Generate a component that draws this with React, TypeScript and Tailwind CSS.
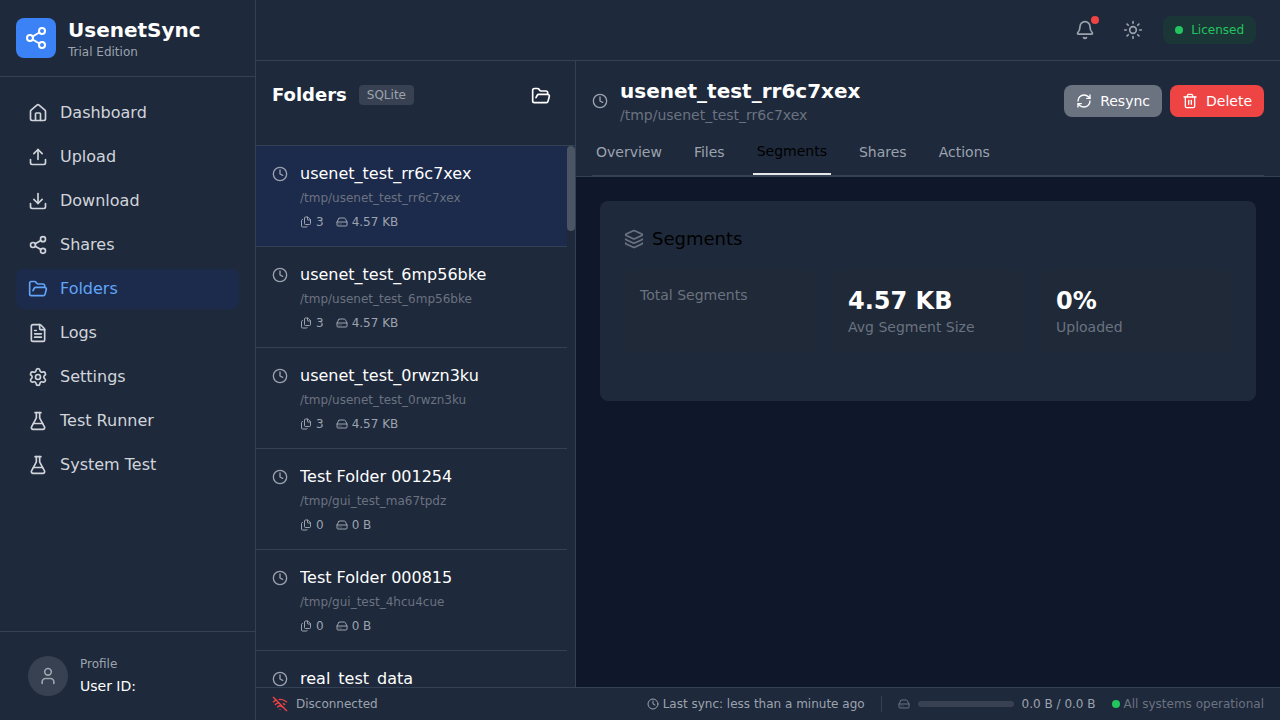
import { Share2, House, Upload, Download, FolderOpen, FileText, Settings, FlaskConical, Clock, Files, HardDrive, Bell, Sun, RefreshCw, Trash2, Layers, User, WifiOff } from "lucide-react";

const nav = [
  { label: "Dashboard", Icon: House },
  { label: "Upload", Icon: Upload },
  { label: "Download", Icon: Download },
  { label: "Shares", Icon: Share2 },
  { label: "Folders", Icon: FolderOpen, active: true },
  { label: "Logs", Icon: FileText },
  { label: "Settings", Icon: Settings },
  { label: "Test Runner", Icon: FlaskConical },
  { label: "System Test", Icon: FlaskConical },
];

const folders = [
  { name: "usenet_test_rr6c7xex", path: "/tmp/usenet_test_rr6c7xex", count: "3", size: "4.57 KB", active: true },
  { name: "usenet_test_6mp56bke", path: "/tmp/usenet_test_6mp56bke", count: "3", size: "4.57 KB" },
  { name: "usenet_test_0rwzn3ku", path: "/tmp/usenet_test_0rwzn3ku", count: "3", size: "4.57 KB" },
  { name: "Test Folder 001254", path: "/tmp/gui_test_ma67tpdz", count: "0", size: "0 B" },
  { name: "Test Folder 000815", path: "/tmp/gui_test_4hcu4cue", count: "0", size: "0 B" },
  { name: "real_test_data" },
];

const tabs = ["Overview", "Files", "Segments", "Shares", "Actions"];

export default function App() {
  return (
    <div className="flex h-[720px] w-[1280px] overflow-hidden bg-[#0f172a] font-['DejaVu_Sans',sans-serif] text-white">
      <aside className="flex w-64 shrink-0 flex-col border-r border-[#334155] bg-[#1e293b]">
        <div className="flex h-[77px] shrink-0 items-center gap-3 border-b border-[#334155] px-4">
          <div className="flex h-10 w-10 items-center justify-center rounded-lg bg-[#3b82f6]">
            <Share2 size={24} strokeWidth={2} className="text-white" />
          </div>
          <div>
            <div className="text-[20px] leading-7 font-bold text-white">UsenetSync</div>
            <div className="text-xs leading-4 text-[#9ca3af]">Trial Edition</div>
          </div>
        </div>
        <nav className="flex flex-1 flex-col gap-1 p-4">
          {nav.map(({ label, Icon, active }) => (
            <div
              key={label}
              className={`flex h-10 items-center gap-3 rounded-lg px-3 text-base ${active ? "bg-[#1c2a4b] text-[#60a5fa]" : "text-[#d1d5db]"}`}
            >
              <Icon size={20} strokeWidth={2} />
              <span>{label}</span>
            </div>
          ))}
        </nav>
        <div className="flex h-[89px] shrink-0 items-center gap-3 border-t border-[#334155] px-7 pb-[1px]">
          <div className="flex h-10 w-10 items-center justify-center rounded-full bg-[#374151]">
            <User size={20} strokeWidth={2} className="text-[#9ca3af]" />
          </div>
          <div>
            <div className="text-xs leading-4 text-[#9ca3af]">Profile</div>
            <div className="mt-1 text-sm leading-5 font-medium text-white">User ID:</div>
          </div>
        </div>
      </aside>

      <div className="flex min-w-0 flex-1 flex-col">
        <header className="flex h-[61px] shrink-0 items-center justify-end gap-3 border-b border-[#334155] bg-[#1e293b] px-6">
          <div className="relative flex h-9 w-9 items-center justify-center text-[#9ca3af]">
            <Bell size={20} strokeWidth={2} />
            <span className="absolute top-1 right-1 h-2 w-2 rounded-full bg-[#ef4444]" />
          </div>
          <div className="flex h-9 w-9 items-center justify-center text-[#9ca3af]">
            <Sun size={20} strokeWidth={2} />
          </div>
          <div className="flex h-7 items-center gap-2 rounded-lg bg-[#1b3637] px-3 text-xs text-[#22c55e]">
            <span className="h-2 w-2 rounded-full bg-[#22c55e]" />
            Licensed
          </div>
        </header>

        <div className="flex min-h-0 flex-1">
          <section className="flex w-80 shrink-0 flex-col border-r border-[#334155] bg-[#1e293b]">
            <div className="flex h-[85px] shrink-0 items-start justify-between border-b border-[#334155] px-4 pt-5">
              <div className="flex items-center gap-3">
                <h2 className="text-lg leading-7 font-bold text-white">Folders</h2>
                <span className="rounded bg-[#374151] px-2 py-0.5 text-xs leading-4 text-[#9ca3af]">SQLite</span>
              </div>
              <FolderOpen size={20} strokeWidth={2} className="mt-[5px] mr-[8px] text-white" />
            </div>
            <div className="flex min-h-0 flex-1">
              <div className="min-w-0 flex-1 overflow-hidden">
                {folders.map((f) => (
                  <div
                    key={f.name}
                    className={`flex h-[101px] gap-3 border-b border-[#334155] px-4 pt-4 ${f.active ? "bg-[#1c2a4b]" : ""}`}
                  >
                    <Clock size={16} strokeWidth={2} className="mt-[4px] shrink-0 text-[#9ca3af]" />
                    <div className="min-w-0">
                      <div className="truncate text-base leading-6 text-white">{f.name}</div>
                      {f.path && (
                        <>
                          <div className="mt-1 truncate text-xs leading-4 text-[#6b7280]">{f.path}</div>
                          <div className="mt-2 flex items-center gap-3 text-xs leading-4 text-[#9ca3af]">
                            <span className="flex items-center gap-1">
                              <Files size={12} strokeWidth={2} />
                              {f.count}
                            </span>
                            <span className="flex items-center gap-1">
                              <HardDrive size={12} strokeWidth={2} />
                              {f.size}
                            </span>
                          </div>
                        </>
                      )}
                    </div>
                  </div>
                ))}
              </div>
              <div className="w-2 shrink-0 bg-[#1e293b]">
                <div className="h-[85px] rounded bg-[#4b5563]" />
              </div>
            </div>
          </section>

          <main className="flex min-w-0 flex-1 flex-col">
            <div className="shrink-0 border-b border-[#334155] bg-[#1e293b]">
              <div className="flex h-[71px] items-start justify-between px-4 pt-4">
                <div className="flex items-center gap-3">
                  <Clock size={16} strokeWidth={2} className="text-[#9ca3af]" />
                  <div>
                    <div className="text-[20px] leading-7 font-bold text-white">usenet_test_rr6c7xex</div>
                    <div className="text-sm leading-5 text-[#6b7280]">/tmp/usenet_test_rr6c7xex</div>
                  </div>
                </div>
                <div className="flex gap-2 pt-2">
                  <div className="flex h-8 items-center gap-2 rounded-lg bg-[#6b7280] px-3 text-sm text-white">
                    <RefreshCw size={16} strokeWidth={2} />
                    Resync
                  </div>
                  <div className="flex h-8 items-center gap-2 rounded-lg bg-[#ef4444] px-3 text-sm text-white">
                    <Trash2 size={16} strokeWidth={2} />
                    Delete
                  </div>
                </div>
              </div>
              <div className="mx-4 flex gap-6 border-b border-[#334155]">
                {tabs.map((t) => (
                  <div
                    key={t}
                    className={`flex h-[43px] items-center border-b-2 px-1 pb-0.5 text-sm ${t === "Segments" ? "border-[#e5e7eb] text-black" : "border-transparent text-[#9ca3af]"}`}
                  >
                    <span className={t === "Segments" ? "-translate-y-px" : ""}>{t}</span>
                  </div>
                ))}
              </div>
            </div>
            <div className="min-h-0 flex-1 bg-[#0f172a] p-6">
              <div className="h-[200px] rounded-lg bg-[#1e293b] p-6">
                <div className="flex items-center gap-2 text-lg leading-7 font-normal text-black">
                  <Layers size={20} strokeWidth={2} className="text-[#6b7280]" />
                  Segments
                </div>
                <div className="mt-4 grid grid-cols-3 gap-4">
                  <div className="rounded-lg bg-[#1f2937] p-4 text-sm leading-5 text-[#6b7280]">Total Segments</div>
                  <div className="rounded-lg bg-[#1f2937] p-4">
                    <div className="text-2xl leading-8 font-bold text-white">4.57 KB</div>
                    <div className="text-sm leading-5 text-[#6b7280]">Avg Segment Size</div>
                  </div>
                  <div className="rounded-lg bg-[#1f2937] p-4">
                    <div className="text-2xl leading-8 font-bold text-white">0%</div>
                    <div className="text-sm leading-5 text-[#6b7280]">Uploaded</div>
                  </div>
                </div>
              </div>
            </div>
          </main>
        </div>

        <footer className="flex h-[33px] shrink-0 items-center justify-between border-t border-[#334155] bg-[#1e293b] px-4 text-xs text-[#9ca3af]">
          <div className="flex items-center gap-2">
            <WifiOff size={16} strokeWidth={2} className="text-[#ef4444]" />
            <span>Disconnected</span>
          </div>
          <div className="flex items-center gap-4">
            <div className="flex items-center gap-1">
              <Clock size={12} strokeWidth={2} />
              Last sync: less than a minute ago
            </div>
            <div className="h-4 w-px bg-[#334155]" />
            <div className="flex items-center gap-2">
              <HardDrive size={12} strokeWidth={2} className="text-[#6b7280]" />
              <div className="h-1.5 w-24 rounded-full bg-[#374151]" />
              <span>0.0 B / 0.0 B</span>
            </div>
            <div className="flex items-center gap-1 text-[#6b7280]">
              <span className="h-2 w-2 rounded-full bg-[#22c55e]" />
              All systems operational
            </div>
          </div>
        </footer>
      </div>
    </div>
  );
}
